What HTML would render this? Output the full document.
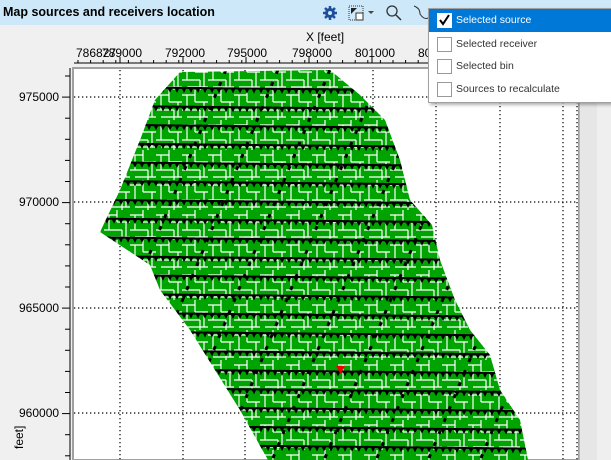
<!DOCTYPE html>
<html><head><style>
body{margin:0;width:611px;height:460px;overflow:hidden;background:#f0f0f0;font-family:"Liberation Sans",sans-serif;position:relative}
.hdr{position:absolute;left:0;top:0;width:611px;height:25px;background:#cde8f9}
.title{position:absolute;left:3px;top:5px;font-size:12.5px;font-weight:bold;color:#000}
.lbl{position:absolute;font-size:12px;color:#000}
.menu{position:absolute;left:428px;top:8px;width:183px;height:93px;background:#fff;border:1px solid #a0a0a0;box-shadow:2px 2px 3px rgba(0,0,0,.3)}
.it{position:absolute;left:0;width:183px;height:23px;font-size:10.5px;color:#333}
.it span{position:absolute;left:27px;top:5px}
.cb{position:absolute;left:8px;top:4px;width:13px;height:13px;border:1px solid #999;background:#fff}
</style></head><body>
<div class="hdr"></div>
<div class="title">Map sources and receivers location</div>
<svg style="position:absolute;left:0;top:0" width="611" height="460">
<g transform="translate(330,13)" fill="#1e4f9a"><circle r="5"/><g stroke="#1e4f9a" stroke-width="2.5"><line x1="-7" y1="0" x2="7" y2="0"/><line x1="0" y1="-7" x2="0" y2="7"/><line x1="-5" y1="-5" x2="5" y2="5"/><line x1="-5" y1="5" x2="5" y2="-5"/></g><circle r="2" fill="#cde8f9"/></g>
<rect x="349" y="6" width="14" height="14" fill="none" stroke="#333" stroke-dasharray="1 1"/><rect x="356" y="13" width="7" height="7" fill="#fff" stroke="#333"/><path d="M351 8 L357 8 L351 14Z" fill="#222"/>
<path d="M368 11 L374 11 L371 14Z" fill="#444"/>
<circle cx="392" cy="11" r="5" fill="none" stroke="#333" stroke-width="1.3"/><line x1="396" y1="15" x2="401" y2="20" stroke="#333" stroke-width="1.5"/>
<path d="M414 6 Q420 8 420 14 Q424 20 428 18" fill="none" stroke="#333"/>
<rect x="73" y="68" width="506" height="392" fill="#fff" stroke="#a0a0a0" stroke-width="2"/>
<rect x="580" y="25" width="31" height="435" fill="#e6e6e6"/><rect x="597" y="25" width="14" height="435" fill="#efefef"/>
<line x1="579.5" y1="68" x2="579.5" y2="460" stroke="#b8b8b8"/>
<g stroke="#000" stroke-dasharray="1.3 2.7" stroke-width="1.2">
<line x1="120" y1="70" x2="120" y2="460"/><line x1="183" y1="70" x2="183" y2="460"/><line x1="245" y1="70" x2="245" y2="460"/><line x1="311" y1="70" x2="311" y2="460"/><line x1="373" y1="70" x2="373" y2="460"/><line x1="436" y1="70" x2="436" y2="460"/><line x1="500" y1="70" x2="500" y2="460"/><line x1="563" y1="70" x2="563" y2="460"/><line x1="577" y1="70" x2="577" y2="460"/>
<line x1="74" y1="97" x2="578" y2="97"/><line x1="74" y1="202" x2="578" y2="202"/><line x1="74" y1="308" x2="578" y2="308"/><line x1="74" y1="413" x2="578" y2="413"/>
</g>
<line x1="74" y1="63" x2="578" y2="63" stroke="#000"/>
<g stroke="#000" id="xt"></g>
<line x1="70" y1="68" x2="70" y2="460" stroke="#000"/>
<g stroke="#000" id="yt"></g>
<defs>
<clipPath id="cp"><polygon points="180,72 330,70 360,95 385,120 400,160 410,200 432,225 440,260 455,300 470,330 490,355 500,390 520,420 528,460 268,460 240,410 215,370 190,330 160,290 150,265 100,232 120,190 140,140 155,100"/></clipPath>
<pattern id="br" width="26" height="30" patternUnits="userSpaceOnUse">
<rect width="26" height="30" fill="#00a400"/>
<g stroke="#fff" stroke-width="1.2" fill="none"><path d="M0 5H13M13 12H26M0 20H18M5 27H26M13 0V12M5 5V20M22 12V27M18 20V30"/></g>
</pattern>
</defs>
<g clip-path="url(#cp)">
<rect x="90" y="65" width="450" height="400" fill="url(#br)"/>
<path id="rows" fill="#000" d=""/>
<g id="diag" stroke="#000" stroke-width="3" stroke-dasharray="4 9"></g>
</g>
<path d="M336 366H345L340.5 374Z" fill="#e00"/>
<text x="9" y="455" font-size="12" transform="rotate(-90 13 445)" font-family="Liberation Sans">feet]</text>
</svg>
<div class="lbl" style="left:76px;top:46px">786827</div><div class="lbl" style="left:102px;top:46px">789000</div>
<div class="lbl" style="left:306px;top:30px">X [feet]</div>
<div class="lbl" style="left:165px;top:46px">792000</div><div class="lbl" style="left:227px;top:46px">795000</div>
<div class="lbl" style="left:292px;top:46px">798000</div><div class="lbl" style="left:355px;top:46px">801000</div>
<div class="lbl" style="left:418px;top:46px">80</div>
<div class="lbl" style="left:19px;top:90px">975000</div><div class="lbl" style="left:19px;top:195px">970000</div>
<div class="lbl" style="left:19px;top:301px">965000</div><div class="lbl" style="left:19px;top:406px">960000</div>
<div class="menu">
<div class="it" style="top:0;background:#0078d7;color:#fff"><div class="cb" style="border-color:#fff">
<svg width="13" height="13" style="position:absolute;left:0;top:0"><path d="M2 6L5 10L11 1" stroke="#000" stroke-width="2" fill="none"/></svg></div><span>Selected source</span></div>
<div class="it" style="top:24px"><div class="cb"></div><span>Selected receiver</span></div>
<div class="it" style="top:46px"><div class="cb"></div><span>Selected bin</span></div>
<div class="it" style="top:69px"><div class="cb"></div><span>Sources to recalculate</span></div>
</div>
<script>
var ns="http://www.w3.org/2000/svg";
function el(p,t,a){var e=document.createElementNS(ns,t);for(var k in a)e.setAttribute(k,a[k]);document.getElementById(p).appendChild(e);}
for(var x=120;x<=563;x+=63){el("xt","line",{x1:x,y1:57,x2:x,y2:63});}
for(var x=78;x<578;x+=12.6){el("xt","line",{x1:x,y1:60,x2:x,y2:63});}
for(var y=76;y<460;y+=21.1){var big=Math.abs((y-97)%105.3)<2;el("yt","line",{x1:big?62:65,y1:y,x2:70,y2:y});}
var d="";
for(var y=86;y<470;y+=18.8){
  for(var x=90;x<540;x+=7){var yy=y+(x-90)*0.01;d+="M"+x+" "+yy+"h7v2h-7z";d+="M"+(x+1)+" "+(yy+2)+"h4l-2 4z";}
}
document.getElementById("rows").setAttribute("d",d);
for(var x=60;x<700;x+=52){el("diag","line",{x1:x,y1:470,x2:x+170,y2:60});}
</script>
</body></html>
